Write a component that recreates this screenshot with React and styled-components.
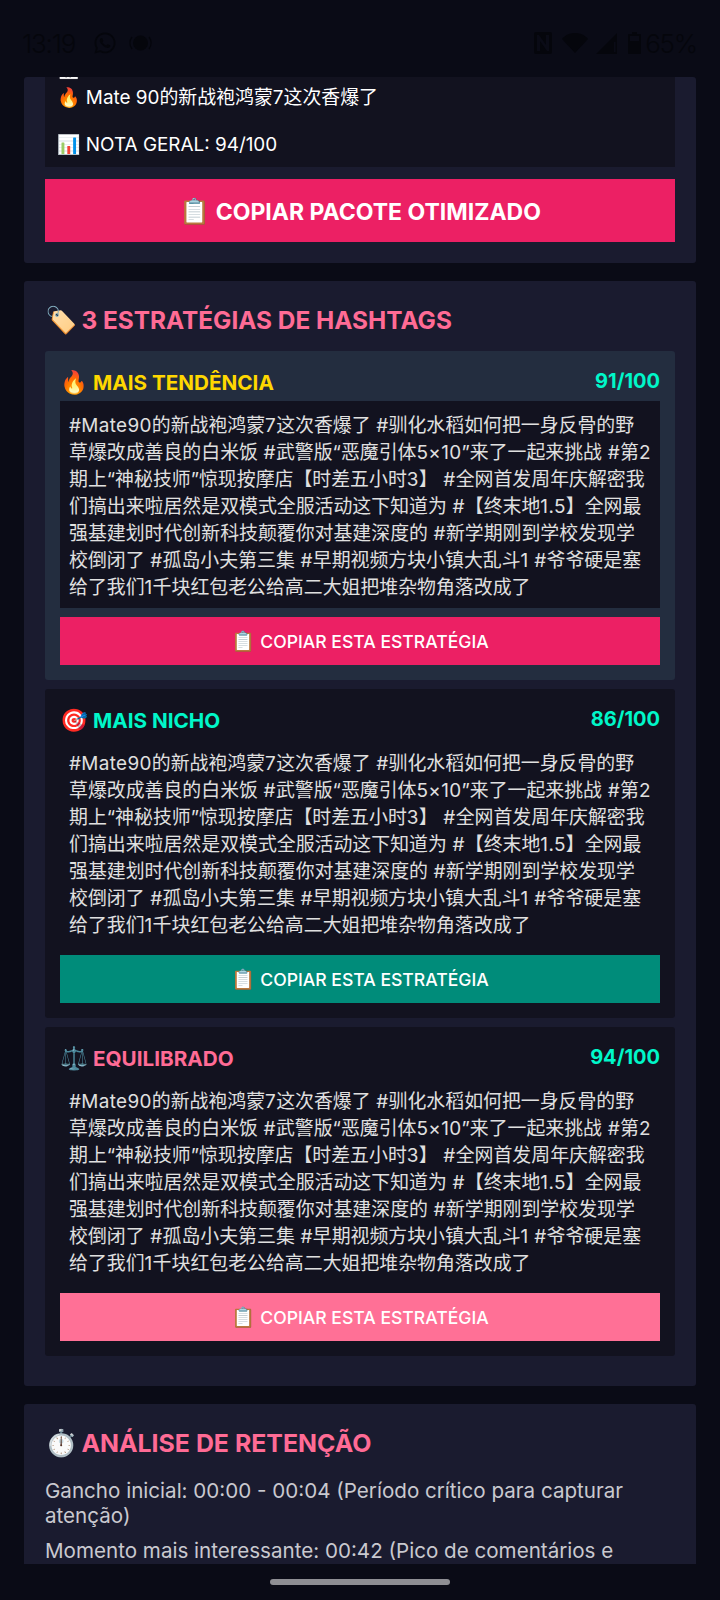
import React from "react";
import styled, { createGlobalStyle } from "styled-components";
import { FaWhatsapp } from "react-icons/fa";

const sans = `Inter, "Noto Sans CJK SC", "Noto Color Emoji", sans-serif`;

const hashtagLines = [
  "#Mate90的新战袍鸿蒙7这次香爆了 #驯化水稻如何把一身反骨的野",
  "草爆改成善良的白米饭 #武警版“恶魔引体5×10”来了一起来挑战 #第2",
  "期上“神秘技师”惊现按摩店【时差五小时3】 #全网首发周年庆解密我",
  "们搞出来啦居然是双模式全服活动这下知道为 #【终末地1.5】全网最",
  "强基建划时代创新科技颠覆你对基建深度的 #新学期刚到学校发现学",
  "校倒闭了 #孤岛小夫第三集 #早期视频方块小镇大乱斗1 #爷爷硬是塞",
  "给了我们1千块红包老公给高二大姐把堆杂物角落改成了",
];

const strategies = [
  { icon: "🔥", name: "MAIS TENDÊNCIA", score: "91/100", tone: "#ffd700", button: "#ec2064", card: "#232d3f", box: "#12121f" },
  { icon: "🎯", name: "MAIS NICHO", score: "86/100", tone: "#00f7c9", button: "#008c7a", card: "#12121f", box: "transparent" },
  { icon: "⚖️", name: "EQUILIBRADO", score: "94/100", tone: "#ff6b95", button: "#ff7096", card: "#12121f", box: "transparent" },
];

const Global = createGlobalStyle`
  html, body { margin: 0; padding: 0; background: #0a0b16; }
  body { font-family: ${sans}; }
`;

const Screen = styled.div`
  width: 720px;
  height: 1600px;
  display: flex;
  flex-direction: column;
  background: #0a0b16;
  overflow: hidden;
`;

const StatusBar = styled.div`
  height: 77px;
  flex: none;
  box-sizing: border-box;
  padding: 9px 23px 0 22px;
  display: flex;
  align-items: center;
  color: #05060c;
`;

const StatusText = styled.span`
  font-size: 26px;
  font-weight: 300;
  letter-spacing: -1.2px;
  margin-left: ${(p) => p.$left || 0}px;
`;

const StatusIcon = styled.svg`
  flex: none;
  margin-left: ${(p) => p.$left || 0}px;
`;

const WhatsappIcon = styled(FaWhatsapp)`
  flex: none;
  margin-left: 18px;
`;

const Spacer = styled.div`
  flex: 1;
`;

const Viewport = styled.main`
  flex: 1;
  overflow: hidden;
  padding: 0 24px;
`;

const Scroller = styled.div`
  display: flex;
  flex-direction: column;
  gap: 18px;
`;

const Panel = styled.section`
  background: #1a1b2f;
  border-radius: 3px;
  padding: ${(p) => p.$padding};
  display: flex;
  flex-direction: column;
`;

const Preview = styled.div`
  background: #12121f;
  margin-top: -20px;
  padding: 0 12px 9px;
  color: #fff;
  font-size: 18.9px;
  line-height: 27px;
`;

const PreviewLine = styled.div`
  margin-top: ${(p) => p.$top || 0}px;
`;

const BigButton = styled.button`
  border: 0;
  height: 63px;
  margin-top: 12px;
  background: #ec2064;
  color: #fff;
  font: 700 23px ${sans};
`;

const Emoji = styled.span`
  font-size: ${(p) => p.$size}px;
  margin-right: ${(p) => p.$gap}px;
`;

const Heading = styled.h2`
  margin: 0 0 ${(p) => p.$below}px;
  font: 700 ${(p) => p.$size}px/34px ${sans};
  color: #ff6b95;
`;

const StrategyList = styled.div`
  display: flex;
  flex-direction: column;
  gap: 9px;
`;

const Card = styled.article`
  background: ${(p) => p.$bg};
  border-radius: 3px;
  padding: 15px;
`;

const CardHead = styled.div`
  display: flex;
  justify-content: space-between;
  align-items: center;
  height: 30px;
  margin-bottom: 5px;
  font: 700 20.7px ${sans};
  color: ${(p) => p.$tone};
`;

const Score = styled.span`
  font-size: 20px;
  color: #00f7c9;
`;

const Tags = styled.div`
  background: ${(p) => p.$bg};
  padding: 11px 9px 7px;
  margin-bottom: 9px;
  color: #e0e0e0;
  font-size: 18.9px;
  line-height: 27px;
`;

const TagLine = styled.div`
  white-space: nowrap;
`;

// Latin runs sit a little wider than the CJK around them
const Latin = styled.span`
  letter-spacing: 0.35px;
`;

const CopyButton = styled.button`
  display: block;
  width: 100%;
  height: 48px;
  border: 0;
  background: ${(p) => p.$bg};
  color: #fff;
  font: 500 17.6px ${sans};
`;

const Retention = styled.p`
  margin: 0 0 10px;
  color: #c9c9cf;
  font-size: 20.6px;
  line-height: 25px;
`;

const NavArea = styled.div`
  height: 36px;
  flex: none;
  display: flex;
  justify-content: center;
  padding-top: 15px;
  box-sizing: border-box;
`;

const NavPill = styled.div`
  width: 180px;
  height: 6px;
  border-radius: 3px;
  background: #8e8e93;
`;

const splitLatin = (line) =>
  line.split(/([\x20-\x7e×]+)/).map((part, i) =>
    i % 2 ? <Latin key={i}>{part}</Latin> : part
  );

export default function App() {
  return (
    <Screen>
      <Global />
      <StatusBar>
        <StatusText>13:19</StatusText>
        <WhatsappIcon size={24} />
        <StatusIcon $left={12} width="23" height="22" viewBox="0 0 23 22" fill="currentColor">
          <circle cx="11.5" cy="11" r="7.5" />
          <path d="M3 5a10 10 0 0 0 0 12M20 5a10 10 0 0 1 0 12" fill="none" stroke="currentColor" strokeWidth="1.4" />
        </StatusIcon>
        <Spacer />
        <StatusIcon width="18" height="22" viewBox="0 0 18 22" fill="currentColor">
          <path fillRule="evenodd" d="M2 0h14a2 2 0 0 1 2 2v18a2 2 0 0 1-2 2H2a2 2 0 0 1-2-2V2a2 2 0 0 1 2-2zm1 3v16h3V9l7 10h2V3h-3v10L5 3z" />
        </StatusIcon>
        <StatusIcon $left={10} width="26" height="20" viewBox="0 0 26 20" fill="currentColor">
          <path d="M0 6C3 2 8 0 13 0s10 2 13 6L13 20z" />
        </StatusIcon>
        <StatusIcon $left={8} width="21" height="21" viewBox="0 0 21 21" fill="currentColor">
          <path fillRule="evenodd" d="M21 0v21H0zM19.5 9h-1.5v10h1.5z" />
        </StatusIcon>
        <StatusIcon $left={11} width="13" height="22" viewBox="0 0 13 22" fill="currentColor">
          <path fillRule="evenodd" d="M4 0h5v2h3a1 1 0 0 1 1 1v18a1 1 0 0 1-1 1H1a1 1 0 0 1-1-1V3a1 1 0 0 1 1-1h3zM2 4v5h9V4z" />
        </StatusIcon>
        <StatusText $left={4}>65%</StatusText>
      </StatusBar>
      <Viewport>
        <Scroller>
          <Panel $padding="0 21px 21px">
            <Preview>
              <PreviewLine>📅</PreviewLine>
              <PreviewLine>🔥 Mate 90的新战袍鸿蒙7这次香爆了</PreviewLine>
              <PreviewLine $top={20}>📊 NOTA GERAL: 94/100</PreviewLine>
            </Preview>
            <BigButton><Emoji $size={25} $gap={0}>📋</Emoji> COPIAR PACOTE OTIMIZADO</BigButton>
          </Panel>
          <Panel $padding="22px 21px 30px">
            <Heading $size={24.4} $below={14}>
              <Emoji $size={26} $gap={4}>🏷️</Emoji>3 ESTRATÉGIAS DE HASHTAGS
            </Heading>
            <StrategyList>
              {strategies.map((s) => (
                <Card key={s.name} $bg={s.card}>
                  <CardHead $tone={s.tone}>
                    <span><Emoji $size={22.5} $gap={0}>{s.icon}</Emoji> {s.name}</span>
                    <Score>{s.score}</Score>
                  </CardHead>
                  <Tags $bg={s.box}>
                    {hashtagLines.map((line) => (
                      <TagLine key={line}>{splitLatin(line)}</TagLine>
                    ))}
                  </Tags>
                  <CopyButton $bg={s.button}><Emoji $size={19.5} $gap={0}>📋</Emoji> COPIAR ESTA ESTRATÉGIA</CopyButton>
                </Card>
              ))}
            </StrategyList>
          </Panel>
          <Panel $padding="22px 21px 0">
            <Heading $size={24.9} $below={18}>
              <Emoji $size={26} $gap={4}>⏱️</Emoji>ANÁLISE DE RETENÇÃO
            </Heading>
            <Retention>Gancho inicial: 00:00 - 00:04 (Período crítico para capturar atenção)</Retention>
            <Retention>Momento mais interessante: 00:42 (Pico de comentários e</Retention>
          </Panel>
        </Scroller>
      </Viewport>
      <NavArea>
        <NavPill />
      </NavArea>
    </Screen>
  );
}
